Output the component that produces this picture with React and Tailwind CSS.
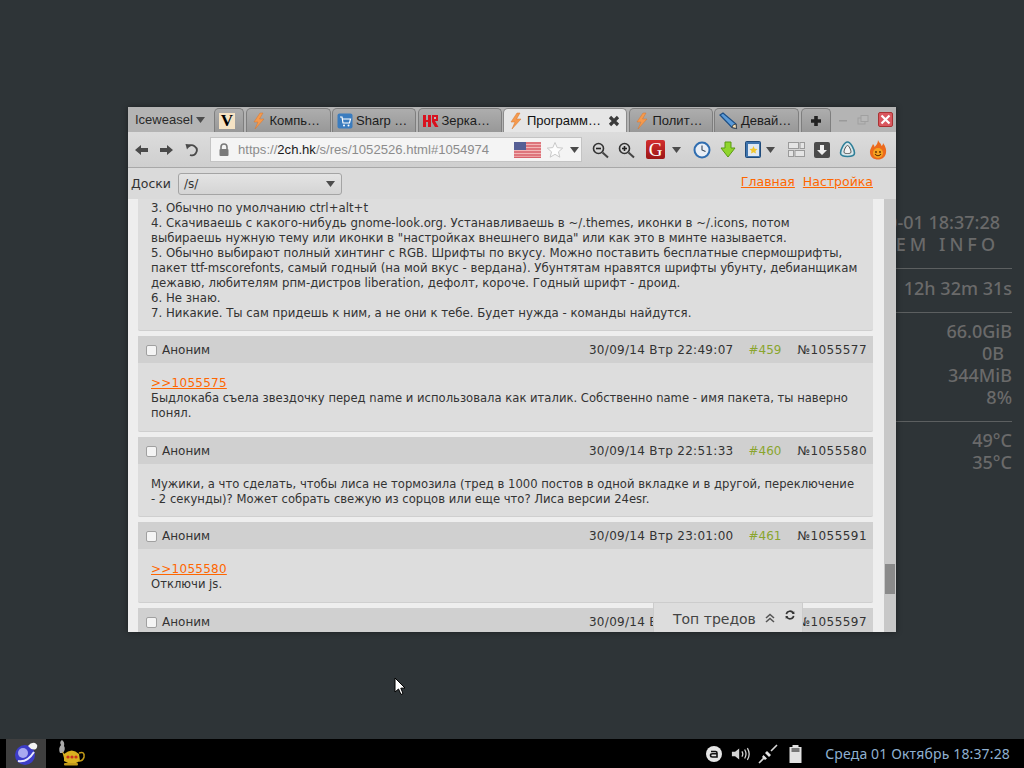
import React from 'react'

const Flash = () => (
  <svg width="16" height="18" viewBox="0 0 16 18" className="shrink-0">
    <path d="M9 1 L3 10 L7 10 L4 17 L13 7 L8.5 7 L12 1 Z" fill="#f59a4e" stroke="#d9772c" strokeWidth="0.5" />
  </svg>
)

const VIcon = () => (
  <div className="w-4 h-4 bg-[#f6e3c4] flex items-center justify-center text-[17px] leading-none font-bold text-black font-['Liberation_Serif',serif]">V</div>
)

const Cart = () => (
  <svg width="16" height="16" viewBox="0 0 16 16" className="shrink-0">
    <rect x="0.5" y="0.5" width="15" height="15" rx="2" fill="#3a7cbf" />
    <path d="M3 4 H5 L6 10 H12.5 L13.5 6 H5.5" fill="none" stroke="#fff" strokeWidth="1.2" />
    <circle cx="7" cy="12.5" r="1" fill="#fff" />
    <circle cx="11.5" cy="12.5" r="1" fill="#fff" />
  </svg>
)

const RedH = () => (
  <svg width="16" height="14" viewBox="0 0 16 14" className="shrink-0">
    <path d="M0 1 H3 V6 H5 V1 H8 V13 H5 V8 H3 V13 H0 Z" fill="#d8121f" />
    <path d="M9 1 H15 V7 H12 L15.5 13 H12 L9 8 Z" fill="#d8121f" />
    <rect x="11" y="3" width="2" height="2" fill="#b9b9b9" />
  </svg>
)

const Pencil = () => (
  <svg width="20" height="18" viewBox="0 0 20 18" className="shrink-0">
    <path d="M2 3 L5 1 L18 12 L18.5 16.5 L14 15.5 Z" fill="#5b9bd8" stroke="#1d4f86" strokeWidth="1.2" />
    <path d="M15 13 L18 12 L18.5 16.5 L14 15.5 Z" fill="#f3dfb8" stroke="#333" strokeWidth="0.8" />
  </svg>
)

const Tab = ({ w, icon, label }) => (
  <div className={`${w} h-[24px] mt-[1px] px-[4px] flex items-center gap-[3px] bg-gradient-to-b from-[#adadad] to-[#989898] border border-b-0 border-[#7e7e7e] rounded-t-[5px] text-[13px] text-[#1c1c1c] overflow-hidden whitespace-nowrap`}>
    {icon}
    {label && <span>{label}</span>}
  </div>
)

const Chevron = ({ className = '' }) => (
  <svg width="9" height="6" viewBox="0 0 9 6" className={`shrink-0 ${className}`}>
    <path d="M0 0 H9 L4.5 6 Z" fill="#4c4c4c" />
  </svg>
)

const TabBar = () => (
  <div className="h-[25px] bg-[#b4b4b4] flex items-center text-[13px]">
    <div className="w-[86px] pl-[7px] flex items-center gap-[3px] text-[#2a2a2a]">
      <span>Iceweasel</span>
      <Chevron />
    </div>
    <div className="flex gap-[1.5px]">
      <Tab w="w-[30px]" icon={<VIcon />} />
      <Tab w="w-[85px]" icon={<Flash />} label="Компь…" />
      <Tab w="w-[84px]" icon={<Cart />} label="Sharp …" />
      <Tab w="w-[84px]" icon={<RedH />} label="Зерка…" />
      <div className="w-[124px] h-[24px] mt-[1px] pl-[4px] pr-[6px] flex items-center gap-[3px] bg-[#e6e6e6] border border-b-0 border-[#8a8a8a] rounded-t-[5px] text-[#111] whitespace-nowrap overflow-hidden">
        <Flash />
        <span className="flex-1">Программ…</span>
        <svg width="12" height="12" viewBox="0 0 12 12" className="shrink-0">
          <path d="M2 2 L10 10 M10 2 L2 10" stroke="#3a3a3a" strokeWidth="3.2" />
        </svg>
      </div>
      <Tab w="w-[84px]" icon={<Flash />} label="Полит…" />
      <div className="w-[85px] h-[24px] mt-[1px] px-[3px] flex items-center gap-[3px] bg-gradient-to-b from-[#adadad] to-[#989898] border border-b-0 border-[#7e7e7e] rounded-t-[5px] text-[#1c1c1c] whitespace-nowrap overflow-hidden">
        <Pencil />
        <span>Девай…</span>
      </div>
      <div className="w-[30px] h-[24px] mt-[1px] flex items-center justify-center bg-gradient-to-b from-[#adadad] to-[#989898] border border-b-0 border-[#7e7e7e] rounded-t-[5px]">
        <svg width="12" height="12" viewBox="0 0 12 12">
          <path d="M6 1 V11 M1 6 H11" stroke="#222" strokeWidth="3.6" />
        </svg>
      </div>
    </div>
    <div className="flex-1 flex items-center justify-end gap-[8px] pr-[3px]">
      <svg width="12" height="12" viewBox="0 0 12 12"><rect x="2" y="6" width="8" height="1.5" fill="#9a9a9a" /></svg>
      <svg width="12" height="12" viewBox="0 0 12 12" className="mr-[1px]">
        <rect x="1" y="4" width="7" height="6" fill="none" stroke="#a0a0a0" />
        <rect x="4" y="1.5" width="7" height="6" fill="#b8b8b8" stroke="#a0a0a0" />
      </svg>
      <div className="w-[15px] h-[15px] rounded-[2px] bg-[#d9575f] border border-[#a33] flex items-center justify-center">
        <svg width="11" height="11" viewBox="0 0 11 11">
          <path d="M1.5 1.5 L9.5 9.5 M9.5 1.5 L1.5 9.5" stroke="#fff" strokeWidth="2.2" />
        </svg>
      </div>
    </div>
  </div>
)

const Flag = () => (
  <svg width="27" height="16" viewBox="0 0 27 16" className="shrink-0">
    <rect width="27" height="16" fill="#f2b6b6" />
    <path d="M0 1 H27 M0 4 H27 M0 7 H27 M0 10 H27 M0 13 H27 M0 15.5 H27" stroke="#d8606a" strokeWidth="1.3" />
    <rect width="12" height="8" fill="#565f95" />
  </svg>
)

const Magnifier = ({ plus }) => (
  <svg width="20" height="18" viewBox="0 0 20 18">
    <circle cx="7.5" cy="7.5" r="5" fill="none" stroke="#333" strokeWidth="1.6" />
    <path d="M11.5 11.5 L17 16.5" stroke="#444" strokeWidth="2" />
    <path d="M5 7.5 H10" stroke="#222" strokeWidth="1.6" />
    {plus && <path d="M7.5 5 V10" stroke="#222" strokeWidth="1.6" />}
  </svg>
)

const UrlBar = () => (
  <div className="w-[372px] h-[25px] ml-[11px] bg-[#f4f4f4] border border-[#c4c4c4] flex items-center text-[13.1px]">
    <svg width="12" height="14" viewBox="0 0 12 14" className="ml-[7px]">
      <path d="M3 6 V4 A3 3 0 0 1 9 4 V6" fill="none" stroke="#7a7a7a" strokeWidth="1.6" />
      <rect x="1.5" y="6" width="9" height="7" rx="1" fill="#7a7a7a" />
    </svg>
    <span className="ml-[8px] flex-1 text-[#8c8c8c] whitespace-nowrap">
      https://<span className="text-[#1a1a1a]">2ch.hk</span>/s/res/1052526.html#1054974
    </span>
    <Flag />
    <svg width="18" height="18" viewBox="0 0 18 18" className="ml-[5px]">
      <path d="M9 1.5 L11.2 6.6 L16.7 7.1 L12.5 10.8 L13.8 16.2 L9 13.3 L4.2 16.2 L5.5 10.8 L1.3 7.1 L6.8 6.6 Z" fill="#fdfdfd" stroke="#c9c9c9" />
    </svg>
    <Chevron className="ml-[6px] mr-[2px]" />
  </div>
)

const Toolbar = () => (
  <div className="h-[36px] bg-gradient-to-b from-[#dcdcdc] to-[#cfcfcf] border-b border-[#a8a8a8] flex items-center pl-[7px]">
    <svg width="13" height="12" viewBox="0 0 13 12"><path d="M0 6 L6 1 V4 H13 V8 H6 V11 Z" fill="#4a4a4a" /></svg>
    <svg width="13" height="12" viewBox="0 0 13 12" className="ml-[12px]"><path d="M13 6 L7 1 V4 H0 V8 H7 V11 Z" fill="#4a4a4a" /></svg>
    <svg width="14" height="14" viewBox="0 0 14 14" className="ml-[12px]">
      <path d="M3 4 A5 5 0 1 1 5 12" fill="none" stroke="#4a4a4a" strokeWidth="1.8" />
      <path d="M0.5 1 L6 1.5 L2 6.5 Z" fill="#4a4a4a" />
    </svg>
    <UrlBar />
    <div className="ml-[9px] mt-[1px]"><Magnifier /></div>
    <div className="ml-[6px] mt-[1px]"><Magnifier plus /></div>
    <div className="ml-[9px] w-[19px] h-[19px] bg-gradient-to-b from-[#d32f2f] to-[#9c1616] rounded-[2px] flex items-center justify-center text-[#fff] text-[19px] leading-none font-['Liberation_Serif',serif]">G</div>
    <Chevron className="ml-[7px]" />
    <svg width="18" height="18" viewBox="0 0 18 18" className="ml-[12px]">
      <circle cx="9" cy="9" r="7.5" fill="#e8eef6" stroke="#2f6db0" strokeWidth="2" />
      <path d="M9 4.5 V9 L12.5 10.5" fill="none" stroke="#345" strokeWidth="1.1" />
    </svg>
    <svg width="16" height="17" viewBox="0 0 16 17" className="ml-[9px]">
      <path d="M5 1 H11 V7 H15 L8 16 L1 7 H5 Z" fill="#8fd52c" stroke="#5b9a13" />
    </svg>
    <svg width="16" height="17" viewBox="0 0 16 17" className="ml-[9px]">
      <rect x="0.5" y="0.5" width="15" height="16" rx="1" fill="#3f74ad" stroke="#1f4a7a" />
      <rect x="3" y="3" width="11" height="12" fill="#dfe8f2" />
      <path d="M8.5 5 L9.7 7.8 L12.5 8 L10.4 9.9 L11 12.6 L8.5 11.2 L6 12.6 L6.6 9.9 L4.5 8 L7.3 7.8 Z" fill="#f1c62d" />
    </svg>
    <Chevron className="ml-[5px]" />
    <svg width="17" height="17" viewBox="0 0 17 17" className="ml-[13px]">
      <rect x="0.5" y="1.5" width="10" height="6" fill="#e4e4e4" stroke="#9a9a9a" />
      <rect x="12" y="1.5" width="4.5" height="6" fill="#e4e4e4" stroke="#9a9a9a" />
      <rect x="0.5" y="9.5" width="5" height="6" fill="#e4e4e4" stroke="#9a9a9a" />
      <rect x="7" y="9.5" width="9.5" height="6" fill="#e4e4e4" stroke="#9a9a9a" />
    </svg>
    <svg width="16" height="16" viewBox="0 0 16 16" className="ml-[9px]">
      <rect width="16" height="16" rx="2" fill="#4a4a4a" />
      <path d="M6 3 H10 V8 H13 L8 13 L3 8 H6 Z" fill="#eee" />
    </svg>
    <svg width="17" height="17" viewBox="0 0 17 17" className="ml-[9px]">
      <path d="M8.5 1 C12 1 15.5 9 15.5 12 C15.5 15 12 15.5 8.5 15.5 C5 15.5 1.5 15 1.5 12 C1.5 9 5 1 8.5 1 Z" fill="#d8e6ea" stroke="#2f7f98" strokeWidth="1.6" />
      <path d="M8.5 4.5 C10 4.5 12 9 12 11 C12 12.5 10 12.5 8.5 12.5 C7 12.5 5 12.5 5 11 C5 9 7 4.5 8.5 4.5 Z" fill="#f2f2f2" stroke="#555" />
    </svg>
    <svg width="18" height="20" viewBox="0 0 18 20" className="ml-[13px]">
      <path d="M9 0 C10 3 12 3 12.5 6 C14 5 14 4 14 3 C17 7 17.5 10 17 13 C16 18 12 19.5 9 19.5 C5 19.5 1.5 17.5 1 13 C0.7 9 3 7 4 4 C5 5 5.5 6 5.5 7 C7.5 5 9 3 9 0 Z" fill="#ec6a1c" />
      <circle cx="9" cy="13" r="5" fill="#f6a321" />
      <circle cx="7" cy="12" r="0.9" fill="#5a2a00" />
      <circle cx="11" cy="12" r="0.9" fill="#5a2a00" />
      <path d="M6 14 Q9 17.5 12 14" fill="none" stroke="#5a2a00" strokeWidth="1.1" />
    </svg>
  </div>
)

const SiteHeader = () => (
  <div className="h-[31px] bg-[#dadada] flex items-center font-['DejaVu_Sans',sans-serif] text-[12.5px] text-[#333]">
    <span className="ml-[3px] mt-[1px]">Доски</span>
    <div className="ml-[7px] mt-[1px] w-[164px] h-[22px] bg-gradient-to-b from-[#e4e4e4] to-[#d4d4d4] border border-[#a4a4a4] rounded-[3px] flex items-center justify-between px-[5px] pr-[6px] text-[12px]">
      <span>/s/</span>
      <Chevron />
    </div>
    <div className="ml-auto mr-[23px] mb-[3px] flex gap-[8px] text-[#ff6600] underline">
      <span>Главная</span>
      <span>Настройка</span>
    </div>
  </div>
)

const Post = ({ name, date, num, id, link, lines, bottom = 'pb-[10px]' }) => (
  <div className={`bg-[#dddddd] border-b border-[#cfcfcf] rounded-[2px] mb-[5px] ${bottom}`}>
    <div className="h-[27px] pt-[1px] bg-[#d0d0d0] flex items-center px-[8px] text-[#333]">
      <span className="w-[11px] h-[11px] bg-[#f4f4f4] border border-[#a0a0a0] rounded-[2px] mr-[5px]" />
      <span>{name}</span>
      <span className="ml-auto tracking-[0.3px]">{date}</span>
      <span className="ml-[15px] text-[#8aa52e]">{num}</span>
      <span className="ml-[16px] mr-[-2px] tracking-[0.45px]">{id}</span>
    </div>
    <div className="px-[13px] pt-[13px] text-[#333] text-[11.6px] whitespace-nowrap">
      {link && <div className="text-[#ff6600] underline text-[12px] tracking-[0.25px]">{link}</div>}
      {lines.map((line) => <div key={line}>{line}</div>)}
    </div>
  </div>
)

const Posts = () => (
  <div className="flex-1 bg-[#eeeeee] pl-[10px] pr-[11px] font-['DejaVu_Sans',sans-serif] text-[12px] leading-[15px] overflow-hidden">
    <div className="bg-[#dddddd] border-b border-[#cfcfcf] rounded-b-[2px] mb-[5px] px-[13px] pt-[2px] pb-[9px] text-[#333] text-[11.75px] whitespace-nowrap">
      <div>3. Обычно по умолчанию ctrl+alt+t</div>
      <div>4. Скачиваешь с какого-нибудь gnome-look.org. Устанавливаешь в ~/.themes, иконки в ~/.icons, потом</div>
      <div>выбираешь нужную тему или иконки в "настройках внешнего вида" или как это в минте называется.</div>
      <div>5. Обычно выбирают полный хинтинг с RGB. Шрифты по вкусу. Можно поставить бесплатные спермошрифты,</div>
      <div>пакет ttf-mscorefonts, самый годный (на мой вкус - вердана). Убунтятам нравятся шрифты убунту, дебианщикам</div>
      <div>дежавю, любителям рпм-дистров liberation, дефолт, короче. Годный шрифт - дроид.</div>
      <div>6. Не знаю.</div>
      <div>7. Никакие. Ты сам придешь к ним, а не они к тебе. Будет нужда - команды найдутся.</div>
    </div>
    <Post
      name="Аноним"
      date="30/09/14 Втр 22:49:07"
      num="#459"
      id="№1055577"
      link=">>1055575"
      lines={['Быдлокаба съела звездочку перед name и использовала как италик. Собственно name - имя пакета, ты наверно', 'понял.']}
    />
    <Post
      name="Аноним"
      date="30/09/14 Втр 22:51:33"
      num="#460"
      id="№1055580"
      bottom="pb-[9px]"
      lines={['Мужики, а что сделать, чтобы лиса не тормозила (тред в 1000 постов в одной вкладке и в другой, переключение', '- 2 секунды)? Может собрать свежую из сорцов или еще что? Лиса версии 24esr.']}
    />
    <Post
      name="Аноним"
      date="30/09/14 Втр 23:01:00"
      num="#461"
      id="№1055591"
      link=">>1055580"
      lines={['Отключи js.']}
    />
    <Post name="Аноним" date="30/09/14 Втр 23:05:12" num="#462" id="№1055597" lines={[]} />
  </div>
)

const Scrollbar = () => (
  <div className="w-[12px] bg-[#c8c8c8] flex flex-col">
    <div className="h-[365px]" />
    <div className="h-[30px] mx-[1px] bg-[#8a8a8a]" />
  </div>
)

const TopThreads = () => (
  <div className="absolute left-[525px] bottom-0 w-[150px] h-[30px] bg-[#dddddd] border border-b-0 border-[#cccccc] flex items-center pl-[19px] pt-[3px] font-['DejaVu_Sans',sans-serif] text-[14px] text-[#444]">
    <span>Топ тредов</span>
    <svg width="10" height="10" viewBox="0 0 10 10" className="ml-[9px] mb-[3px]">
      <path d="M1 5 L5 1.5 L9 5 M1 9 L5 5.5 L9 9" fill="none" stroke="#555" strokeWidth="1.6" />
    </svg>
    <svg width="10" height="10" viewBox="0 0 11 11" className="ml-[10px] mb-[9px]">
      <path d="M1.5 4.5 A4 4 0 0 1 9 3.5 M9.5 6.5 A4 4 0 0 1 2 7.5" fill="none" stroke="#333" strokeWidth="1.8" />
      <path d="M7.5 4.5 L10.5 4.5 L10 1 Z M3.5 6.5 L0.5 6.5 L1 10 Z" fill="#333" />
    </svg>
  </div>
)

const BrowserWindow = () => (
  <div className="absolute left-[128px] top-[107px] w-[768px] h-[525px] flex flex-col font-['Liberation_Sans',sans-serif] shadow-[0_0_6px_rgba(0,0,0,0.4)]">
    <TabBar />
    <Toolbar />
    <SiteHeader />
    <div className="flex-1 flex overflow-hidden relative">
      <Posts />
      <Scrollbar />
      <TopThreads />
    </div>
  </div>
)

const Conky = () => (
  <div className="absolute left-[700px] top-[211px] w-[312px] font-['Noto_Sans',sans-serif] font-medium text-[18px] text-[#6a6a6a] text-right">
    <div className="h-[22px] leading-[22px] mr-[12px]">2014-10-01 18:37:28</div>
    <div className="h-[22px] leading-[22px] mr-[13px] tracking-[4px]">SYSTEM INFO</div>
    <div className="h-[14px] border-b border-[#5c5f60]" />
    <div className="h-[44px] leading-[38px] border-b border-[#5c5f60]">12h 32m 31s</div>
    <div className="pt-[7px] leading-[22px]">
      <div>66.0GiB</div>
      <div className="mr-[8px]">0B</div>
      <div>344MiB</div>
      <div>8%</div>
    </div>
    <div className="h-[14px] border-b border-[#5c5f60]" />
    <div className="pt-[7px] leading-[22px]">
      <div>49°C</div>
      <div>35°C</div>
    </div>
  </div>
)

const Cursor = () => (
  <svg width="12" height="19" viewBox="0 0 12 19" className="absolute left-[394px] top-[677px]">
    <path d="M1 1 V15 L4.5 12 L7 17.5 L9 16.5 L6.8 11.2 L11 11 Z" fill="#fff" stroke="#000" />
  </svg>
)

const Taskbar = () => (
  <div className="h-[29px] bg-black flex items-center font-['Noto_Sans',sans-serif]">
    <div className="ml-[6px] w-[40px] h-[29px] bg-[#3f3f3f] flex items-center justify-center">
      <svg width="26" height="26" viewBox="0 0 26 26">
        <circle cx="12" cy="14" r="10" fill="#3c3cc8" />
        <circle cx="10" cy="12" r="5" fill="#a9a9f0" />
        <path d="M5 20 Q14 22 21 11" fill="none" stroke="#e8e8ff" strokeWidth="2" />
        <path d="M15 5 Q18 1 22 2 Q26 4 23 8 Q19 10 15 5 Z" fill="#f4f4f4" />
      </svg>
    </div>
    <svg width="28" height="28" viewBox="0 0 28 28" className="ml-[12px]">
      <path d="M2 13 Q0 8 3 5 Q1 2 4 0 Q7 2 6 6 Q8 9 5 13 Z" fill="#aaaaaa" />
      <path d="M6 14 Q14 7 21 14 L22 21 Q14 26 6 21 Z" fill="#d9b020" />
      <path d="M21 13 Q27 11 26 17 Q25 21 21 21" fill="none" stroke="#c29a18" strokeWidth="1.6" />
      <path d="M4 11 L8 16 L6 18 Z" fill="#d9b020" />
      <rect x="6" y="23" width="14" height="2.5" rx="1" fill="#c29a18" />
      <circle cx="10" cy="17" r="1.6" fill="#c8321e" />
      <circle cx="14" cy="17" r="1.6" fill="#c8321e" />
      <circle cx="18" cy="17" r="1.6" fill="#c8321e" />
    </svg>
    <div className="ml-auto flex items-center">
      <svg width="16" height="16" viewBox="0 0 16 16">
        <circle cx="8" cy="8" r="8" fill="#e6e6e6" />
        <path d="M5 5.5 H9.5 Q11 5.5 11 7 V11 H6.5 Q4.5 11 4.5 9.3 Q4.5 7.8 6.5 7.8 H10.5" fill="none" stroke="#111" strokeWidth="1.6" />
      </svg>
      <svg width="20" height="16" viewBox="0 0 22 16" className="ml-[9px]">
        <path d="M1 5.5 H4.5 L9 2 V14 L4.5 10.5 H1 Z" fill="#d4d4d4" />
        <path d="M12 5 Q14 8 12 11 M15 3 Q18 8 15 13 M18 1.5 Q22 8 18 14.5" fill="none" stroke="#d4d4d4" strokeWidth="1.4" />
      </svg>
      <svg width="20" height="20" viewBox="0 0 20 20" className="ml-[7px]">
        <path d="M1 19 L7 13 M13 7 L19 1" stroke="#d8d8d8" strokeWidth="1.6" />
        <path d="M5.5 11 L9 14.5 L7 16 L4 13 Z M9 7 L13 11 L11 13 L7 9 Z" fill="#e4e4e4" />
      </svg>
      <svg width="15" height="20" viewBox="0 0 14 20" className="ml-[10px]">
        <path d="M4 1 H10 V3 H13 V19 H1 V3 H4 Z" fill="#e2e2e2" />
        <rect x="3" y="4" width="8" height="4" fill="#777" />
      </svg>
      <span className="ml-[22px] mr-[14px] text-[14px] tracking-[0.15px] text-[#8fb0d0] whitespace-nowrap">Среда 01 Октябрь 18:37:28</span>
    </div>
  </div>
)

export default function App() {
  return (
    <div className="w-[1024px] h-[768px] flex flex-col overflow-hidden bg-[#2e3437]">
      <div className="relative flex-1">
        <Conky />
        <BrowserWindow />
        <Cursor />
      </div>
      <Taskbar />
    </div>
  )
}
